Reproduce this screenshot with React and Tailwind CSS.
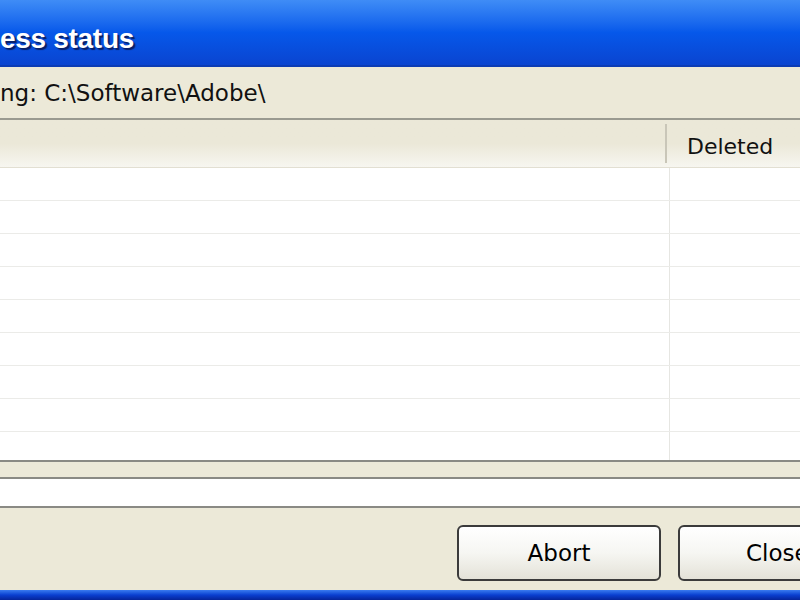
const rows = Array.from({ length: 9 });

const XpButton = ({ label, className }) => (
  <button
    className={`h-[56px] rounded-[6px] border-2 border-[#3b3b3b] bg-gradient-to-b from-white via-[#f6f6f2] to-[#e4e2d8] text-[23px] text-black ${className}`}
  >
    {label}
  </button>
);

export default function App() {
  return (
    <div
      className="w-[800px] h-[600px] overflow-hidden bg-[#ece9d8] flex flex-col"
      style={{ fontFamily: '"DejaVu Sans", Verdana, sans-serif' }}
    >
      {/* Title bar */}
      <div className="h-[67px] shrink-0 bg-gradient-to-b from-[#3f8cf6] via-[#0658ea] to-[#0a44d0] flex items-center border-b-2 border-[#0c3cb4]">
        <span
          className="text-white font-bold text-[28px] mt-[13px] tracking-[-0.3px] [text-shadow:2px_2px_1px_#0a1f66]"
          style={{ fontFamily: '"Liberation Sans", Arial, sans-serif' }}
        >
          ess status
        </span>
      </div>

      {/* Current path */}
      <div className="h-[53px] shrink-0 flex items-center border-b-2 border-[#9a9a90]">
        <span className="text-[23px] text-[#111] mt-[2px]">
          ng: C:\Software\Adobe\
        </span>
      </div>

      {/* List */}
      <div className="bg-white flex flex-col h-[342px] shrink-0 overflow-hidden border-b-2 border-[#8a8a84]">
        <div className="h-[48px] shrink-0 flex bg-gradient-to-b from-[#ebe8d8] via-[#ebe8d8] to-[#f7f6f0] border-b border-[#e2dfd2]">
          <div className="w-[667px] border-r-2 border-[#c9c6b8] my-[4px]" />
          <div className="flex-1 flex items-center pl-[20px] text-[22px] text-[#111] pt-[6px]">
            Deleted
          </div>
        </div>
        {rows.map((_, i) => (
          <div key={i} className="h-[33px] shrink-0 flex border-b border-[#ebebe8]">
            <div className="w-[670px] border-r border-[#e6e6e2]" />
            <div className="flex-1" />
          </div>
        ))}
      </div>

      {/* Status box */}
      <div className="h-[15px] shrink-0" />
      <div className="h-[31px] shrink-0 bg-white border-y-2 border-[#8a8a84]" />

      {/* Buttons */}
      <div className="flex-1 flex items-center gap-[17px] pl-[457px] pt-[8px]">
        <XpButton label="Abort" className="w-[204px] shrink-0" />
        <XpButton label="Close" className="w-[160px] shrink-0 text-left pl-[66px]" />
      </div>

      {/* Bottom frame */}
      <div className="h-[10px] shrink-0 bg-gradient-to-b from-[#3a7af0] via-[#0a3fd0] to-[#06249a]" />
    </div>
  );
}
